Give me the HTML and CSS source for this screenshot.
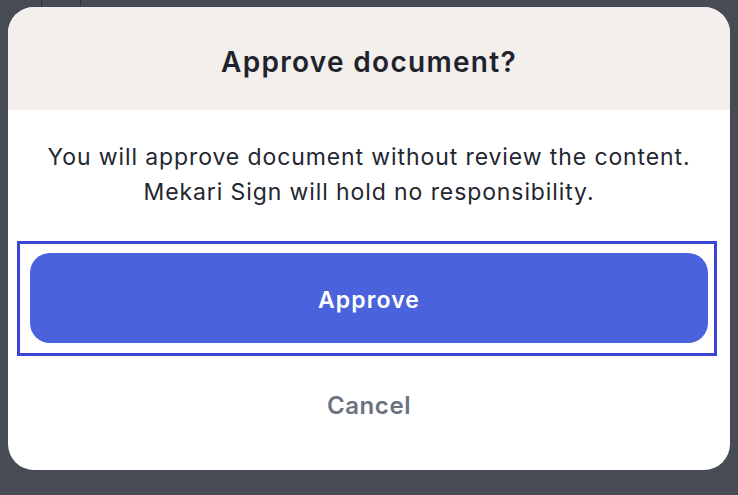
FILE: index.html
```html
<!DOCTYPE html>
<html lang="en">
<head>
    <meta charset="UTF-8">
    <title>Approve document</title>
    <link rel="stylesheet" href="styles.css">
</head>
<body>
    <div class="behind-icon"></div>
    <div class="modal">
        <div class="modal-header">
            <h1 class="modal-title">Approve document?</h1>
        </div>
        <div class="modal-body">
            <p class="modal-text">You will approve document without review the content.<br>Mekari Sign will hold no responsibility.</p>
            <div class="focus-ring">
                <button class="approve-btn">Approve</button>
            </div>
            <button class="cancel-btn">Cancel</button>
        </div>
    </div>
</body>
</html>
```

FILE: styles.css
```css
html, body {
    height: 100%;
}
body {
    margin: 0;
    padding: 7px 8px 0 8px;
    box-sizing: border-box;
    background-color: #474b53;
    font-family: Inter, "Noto Sans", sans-serif;
    overflow: hidden;
}
.behind-icon {
    position: absolute;
    top: -6px;
    left: 41px;
    width: 38px;
    height: 12px;
    border: 1px solid #2f3339;
    border-radius: 3px;
}
.modal {
    position: relative;
    width: 722px;
    height: 463px;
    background-color: #fff;
    border-radius: 26px;
    overflow: hidden;
}
.modal-header {
    height: 103px;
    box-sizing: border-box;
    padding-top: 6px;
    background-color: #f2efec;
    display: flex;
    align-items: center;
    justify-content: center;
}
.modal-title {
    margin: 0;
    font-size: 28px;
    line-height: 34px;
    font-weight: 600;
    color: #1f232b;
    letter-spacing: 1.3px;
}
.modal-body {
    display: flex;
    flex-direction: column;
}
.modal-text {
    margin: 30px 0 0 0;
    text-align: center;
    font-size: 23px;
    line-height: 35px;
    letter-spacing: 0.9px;
    color: #232730;
}
.focus-ring {
    margin: 31px 13px 0 9px;
    border: 3px solid #3b44d4;
    padding: 9px 6px 10px 10px;
}
.approve-btn {
    display: block;
    width: 100%;
    height: 90px;
    border: none;
    border-radius: 20px;
    background-color: #4a63dd;
    color: #fff;
    font-family: inherit;
    font-size: 23px;
    font-weight: 600;
    letter-spacing: 1.1px;
    padding-top: 4px;
    cursor: pointer;
}
.cancel-btn {
    margin-top: 36px;
    align-self: center;
    background: none;
    border: none;
    padding: 0;
    font-family: inherit;
    font-size: 24px;
    line-height: 27px;
    font-weight: 600;
    letter-spacing: 0.6px;
    color: #6b7280;
    cursor: pointer;
}
```
